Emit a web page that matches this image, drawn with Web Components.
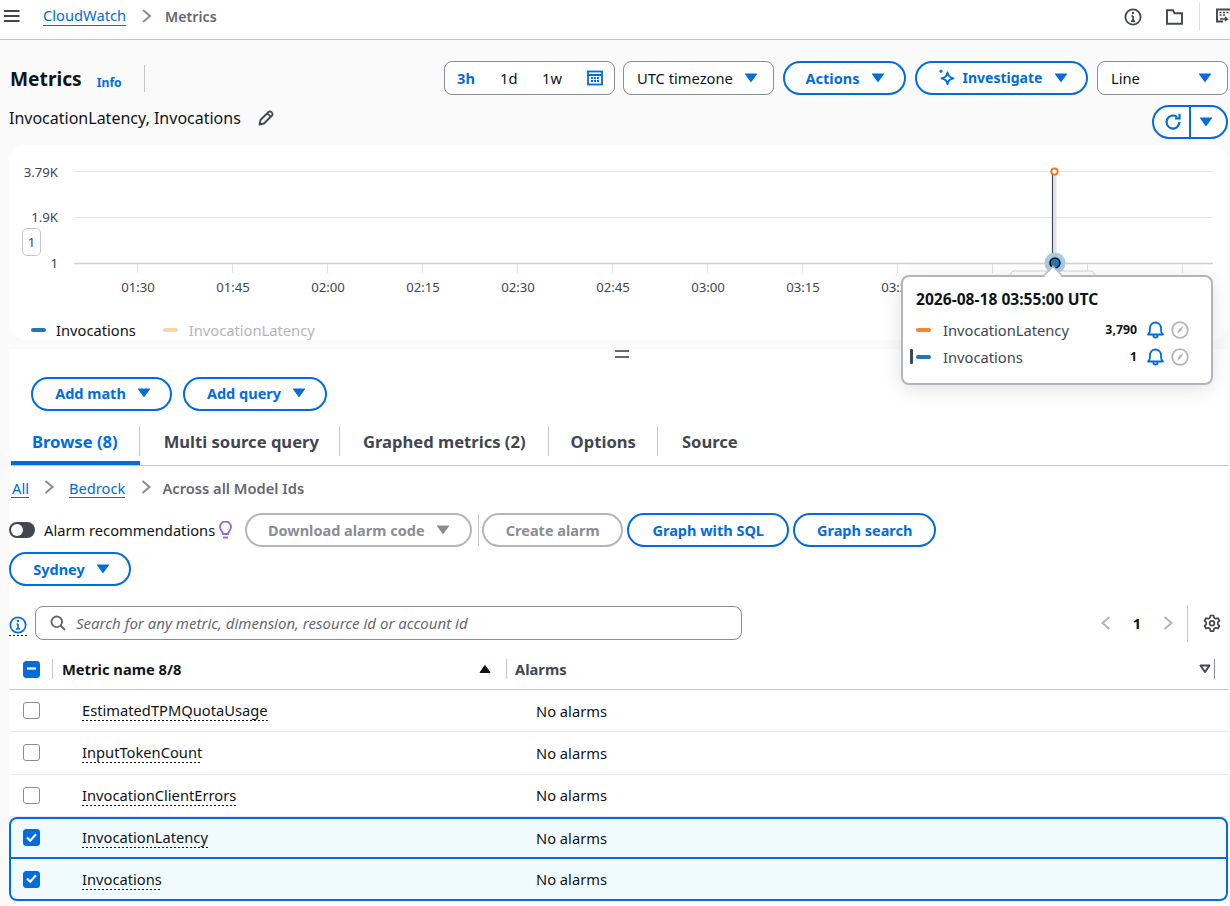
<!DOCTYPE html>
<html><head><meta charset="utf-8"><style>
html,body{margin:0;padding:0;height:906px;overflow:hidden;background:#fafafa;font-family:"Noto Sans",sans-serif;color:#0f141a;font-size:14.7px}
</style></head><body>
<cw-app></cw-app>
<script>
const ARW='<svg width="14" height="10" viewBox="0 0 14 10"><path d="M1.5 1h11L7 8.5z" fill="currentColor" stroke="currentColor" stroke-width="1.2" stroke-linejoin="round"/></svg>';
const CHEV='<svg width="12" height="16" viewBox="0 0 12 16"><path d="M2.5 2l7 6-7 6" fill="none" stroke="#8c8c94" stroke-width="2"/></svg>';
function def(name,css,html){customElements.define(name,class extends HTMLElement{connectedCallback(){if(this.shadowRoot)return;const s=this.attachShadow({mode:'open'});s.innerHTML='<style>'+css+'</style>'+(typeof html==='function'?html(this):html);}});}

def('cw-btn',`:host{display:inline-flex;box-sizing:border-box;height:34px;align-items:center;justify-content:center;gap:var(--gap,13px);padding:0 0 var(--pb,0) var(--pl,0);border:2px solid #006ce0;border-radius:20px;color:#006ce0;font-weight:700;font-size:14.5px;background:#fff;white-space:nowrap;line-height:20px}
:host([disabled]){border-color:#b4b4bb;color:#8c8c94}
svg{display:block}`,el=>`<slot></slot>${el.hasAttribute('noarrow')?'':ARW}`);

def('cw-check',`:host{display:block;width:17px;height:17px;box-sizing:border-box;border:1.5px solid #8c8c94;border-radius:3px;background:#fff}
:host([on]),:host([mixed]){background:#006ce0;border-color:#006ce0}
svg{display:block;margin:-1.5px}`,el=>el.hasAttribute('on')?'<svg width="17" height="17" viewBox="0 0 17 17"><path d="M4 8.5l3.2 3.2L13 5.3" fill="none" stroke="#fff" stroke-width="2.2"/></svg>':el.hasAttribute('mixed')?'<svg width="17" height="17" viewBox="0 0 17 17"><path d="M4 8.5h9" fill="none" stroke="#fff" stroke-width="2.2"/></svg>':'');

def('cw-topbar',`:host{display:flex;box-sizing:border-box;height:40px;background:#fff;border-bottom:1px solid #c6c6cd;align-items:center;padding:0 0 7px 4px;font-size:14.7px;color:#5f6b7a}
a{color:#006ce0;border-bottom:1px solid #006ce0;line-height:19px;margin-left:23px}
b{font-weight:600;color:#656871;margin-left:12px;font-size:14.2px}
.c{margin-left:15px;display:block}
.r{margin-left:auto;display:flex;align-items:center;margin-top:1px}
.sep{width:1px;height:27px;background:#dedee3;margin:0 16px 0 16px}
svg{display:block}`,`
<svg width="16" height="14" viewBox="0 0 16 14"><path d="M0 2h15.5M0 7h15.5M0 12h15.5" stroke="#414750" stroke-width="1.8"/></svg>
<a>CloudWatch</a><svg class="c" width="12" height="16" viewBox="0 0 12 16"><path d="M2 2l7 6-7 6" fill="none" stroke="#8c8c94" stroke-width="2"/></svg><b>Metrics</b>
<div class="r">
<svg width="18" height="18" viewBox="0 0 18 18" style="margin-right:24px"><circle cx="9" cy="9" r="7.6" fill="none" stroke="#414750" stroke-width="1.8"/><path d="M9 8v5M7 13.2h4M7.3 8H9" stroke="#414750" stroke-width="1.7" fill="none"/><circle cx="9" cy="5" r="1.2" fill="#414750"/></svg>
<svg width="17" height="16" viewBox="0 0 17 16"><path d="M1 1.2h6l1.5 3H16v10.6H1z" fill="none" stroke="#414750" stroke-width="1.9"/></svg>
<div class="sep"></div>
<svg width="14" height="18" viewBox="0 0 14 18"><path d="M14 1.5H1v12h6" fill="none" stroke="#414750" stroke-width="1.9"/><path d="M3.5 4.5h2M7 4.5h2M10.5 4.5h2M3.5 7h2M7 7h2" stroke="#414750" stroke-width="1.6"/><path d="M4 11h7l-2-2M11 11l-2 2" fill="none" stroke="#414750" stroke-width="1.6"/></svg>
</div>`);

def('cw-seg',`:host{display:flex;box-sizing:border-box;height:34px;width:171px;border:1px solid #8c8c94;border-radius:8px;background:#fff;align-items:center;padding-left:12px;font-size:14.7px;margin-right:-1px}
span{display:block}.a{color:#006ce0;font-weight:700;width:43px}.n{width:43px}svg{display:block}`,`<span class="a">3h</span><span class="n" style="width:42px">1d</span><span class="n" style="width:45px">1w</span>
<svg width="16" height="16" viewBox="0 0 16 16"><rect x="1" y="1.5" width="14" height="13" fill="none" stroke="#006ce0" stroke-width="1.8"/><path d="M1 5h14" stroke="#006ce0" stroke-width="2"/><path d="M4 8h2M7 8h2M10 8h2M4 11h2M7 11h2M10 11h2" stroke="#006ce0" stroke-width="1.8"/></svg>`);

def('cw-select',`:host{display:flex;box-sizing:border-box;height:34px;border:1px solid #8c8c94;border-radius:8px;background:#fff;align-items:center;justify-content:space-between;padding:0 15px 0 13px;color:#0f141a;font-size:14.7px}
svg{color:#006ce0;display:block}`,`<slot></slot>`+ARW);

def('cw-header',`:host{display:block;box-sizing:border-box;height:105px;padding:21px 2px 0 9px;position:relative}
.row{display:flex;align-items:flex-start}
h1{margin:0 0 0 1px;font-size:19.2px;font-weight:700;line-height:36px;color:#0f141a}
.info{color:#006ce0;font-weight:700;font-size:12.2px;margin:8px 0 0 15px;line-height:28px}
.sep{width:1px;height:27px;background:#c6c6cd;margin:4px 0 0 22px}
.ctl{margin-left:auto;display:flex;gap:9px}
.row2{display:flex;align-items:flex-start;margin-top:8px}
.t{font-size:16px;line-height:20px;margin-top:3px;color:#0f141a}
.pen{margin:5px 0 0 17px;display:block}
.ref{margin-left:auto;display:flex;box-sizing:border-box;width:76px;height:34px;border:2px solid #006ce0;border-radius:20px;background:#fff;color:#006ce0;align-items:center}
.ref div{flex:1;display:flex;justify-content:center;align-items:center;height:100%}
.ref div:first-child{padding-left:2px}
.ref div+div{border-left:2px solid #006ce0;flex:0 0 37px;box-sizing:border-box;padding-right:6px}
.ref svg{display:block}
`,`<div class="row"><h1>Metrics</h1><div class="info">Info</div><div class="sep"></div>
<div class="ctl"><cw-seg></cw-seg><cw-select style="width:151px">UTC timezone</cw-select>
<cw-btn style="width:123px;--gap:12px;--pl:2px">Actions</cw-btn>
<cw-btn style="width:173px;--gap:12px;--pl:3px"><span style="display:inline-flex;align-items:center;gap:7px;font-size:14px"><svg width="18" height="18" viewBox="0 0 18 18"><path d="M9.500 3.500c.8 3.600 2 4.700 6 5.800-4 1.100-5.200 2.200-6 5.900-.8-3.700-2-4.800-6-5.900 4-1.100 5.200-2.200 6-5.800z" fill="none" stroke="#006ce0" stroke-width="1.900" stroke-linejoin="round"/><path d="M3 .5v3.500M1.200 2.200h3.600" stroke="#006ce0" stroke-width="1.300"/></svg>Investigate</span></cw-btn>
<cw-select style="width:131px">Line</cw-select></div></div>
<div class="row2"><div class="t">InvocationLatency, Invocations</div>
<svg class="pen" width="16" height="16" viewBox="0 0 16 16"><path d="M1.500 14.500l1-4.500L10.500 2a1.900 1.900 0 0 1 2.700 0l.8.8a1.900 1.900 0 0 1 0 2.700L6 13.500z M9.300 3.300l3.400 3.400" fill="none" stroke="#414750" stroke-width="1.800" stroke-linejoin="round"/></svg>
<div class="ref"><div><svg width="18" height="18" viewBox="0 0 18 18"><path d="M15.500 9A6.500 6.500 0 1 1 13 3.900" fill="none" stroke="#006ce0" stroke-width="2.200"/><path d="M15.500 .8v4.500H11" fill="none" stroke="#006ce0" stroke-width="2.200"/></svg></div><div>${ARW}</div></div></div>`);

const times=[['01:30',138],['01:45',233],['02:00',328],['02:15',423],['02:30',518],['02:45',613],['03:00',708],['03:15',803],['03:30',898],['03:45',993],['04:00',1088],['04:15',1183]];
def('cw-chart',`:host{display:block;box-sizing:border-box;height:195px;margin:0 2px 0 9px;background:#fff;border-radius:16px;position:relative;overflow:visible}
svg{position:absolute;left:-9px;top:-145px;overflow:visible}
text{font-family:"Noto Sans",sans-serif;font-size:13.200px;fill:#424650}
.one{position:absolute;left:13px;top:83px;width:19px;height:28px;box-sizing:border-box;border:1px solid #c6c6cd;border-radius:5px;background:#fff;font-size:13.200px;display:flex;align-items:center;justify-content:center;color:#424650}
.leg{position:absolute;left:22px;top:175px;display:flex;align-items:center;font-size:14.7px;line-height:20px}
.leg i{display:block;width:15px;height:4px;border-radius:2px}
`,`<svg width="1230" height="400">
<path d="M74 171.500H1213M74 217.500H1213" stroke="#e6e6ea" stroke-width="1"/>
<path d="M74 263.500H1213" stroke="#d0d0d6" stroke-width="1.500"/>
${times.map(t=>`<path d="M${t[1]-.5} 264v9" stroke="#e0e0e4"/>`).join('')}
${times.filter(t=>t[1]<900).map(t=>`<text x="${t[1]}" y="292" text-anchor="middle">${t[0]}</text>`).join('')}
<text x="58" y="177" text-anchor="end">3.79K</text><text x="58" y="222" text-anchor="end">1.9K</text><text x="58" y="268" text-anchor="end">1</text>
<rect x="1010.500" y="271" width="84" height="20" rx="4" fill="#fff" stroke="#d5d5da"/>
<path d="M1055 172v90" stroke="#e0e0e6" stroke-width="3"/><path d="M1052.500 172v90" stroke="#414750" stroke-width="1.200"/>
<circle cx="1054.500" cy="171.500" r="3.200" fill="#fff" stroke="#ec7211" stroke-width="1.800"/>
<circle cx="1055" cy="263" r="10.500" fill="#a6cbe3"/><circle cx="1055" cy="263" r="5" fill="#1f78b4" stroke="#0f141a" stroke-width="1.600"/>
</svg>
<div class="one">1</div>
<div class="leg"><i style="background:#1f78b4"></i><span style="margin:0 27px 0 10px">Invocations</span><i style="background:#fdd3ac"></i><span style="margin-left:11px;color:#b4b4bb">InvocationLatency</span></div>`);

def('cw-tip',`:host{position:absolute;left:901px;top:275px;width:312px;height:110px;box-sizing:border-box;background:#fff;border:2px solid #b4b4bb;border-radius:8px;box-shadow:0 4px 20px rgba(0,7,22,.12);padding:12px 22px 0 13px;z-index:5;display:block}
.h{font-weight:700;font-size:15.600px;line-height:21px;margin-bottom:6px}
.r{display:flex;align-items:center;height:27px;color:#424650;font-size:14.7px;position:relative}
.r i{display:block;width:15px;height:4px;border-radius:2px;margin-right:12px}
.r b{margin-left:auto;font-size:12.300px;color:#0f141a;margin-right:10px;font-weight:700}
svg{display:block}.bell{margin-right:7px}.bar{position:absolute;left:-6px;top:6px;width:3px;height:15px;background:#414750;border-radius:1px}
.ar{position:absolute;left:141px;top:-11px;width:16px;height:16px;background:#fff;border-left:2px solid #b4b4bb;border-top:2px solid #b4b4bb;transform:rotate(45deg) scale(.75)}`,()=>{
const bell='<svg class="bell" width="17" height="18" viewBox="0 0 17 18"><path d="M1 13.500c1.500-1 2-2.200 2-4.500V7a5.500 5.500 0 0 1 11 0v2c0 2.300.5 3.500 2 4.500z M6.300 14c0 3.500 4.400 3.500 4.400 0" fill="none" stroke="#006ce0" stroke-width="1.800" stroke-linejoin="round"/></svg>';
const cmp='<svg width="18" height="18" viewBox="0 0 18 18"><circle cx="9" cy="9" r="7.800" fill="none" stroke="#b4b4bb" stroke-width="1.800"/><path d="M12.500 5L10 10 6 13 8 8z" fill="#b4b4bb"/></svg>';
return `<div class="ar"></div><div class="h">2026-08-18 03:55:00 UTC</div>
<div class="r"><i style="background:#f58536"></i>InvocationLatency<b>3,790</b>${bell}${cmp}</div>
<div class="r"><div class="bar"></div><i style="background:#1f78b4"></i>Invocations<b>1</b>${bell}${cmp}</div>`});

def('cw-tabs',`:host{display:flex;height:42px;box-sizing:border-box;border-bottom:1px solid #c6c6cd;margin-top:13px;margin-left:2px;align-items:flex-start;font-size:16.600px;font-weight:700;color:#424650}
.t{box-sizing:border-box;height:41px;padding:5px 22px 0;line-height:25px;position:relative;white-space:nowrap}
.t+.t::before{content:"";position:absolute;left:-1px;top:2px;width:1px;height:30px;background:#c6c6cd}
.a{color:#006ce0;border-bottom:4px solid #006ce0;padding-left:21px;padding-right:22px}`,`<div class="t a">Browse (8)</div><div class="t" style="padding-left:24px;padding-right:21px">Multi source query</div><div class="t" style="padding-left:23px;padding-right:23px">Graphed metrics (2)</div><div class="t" style="padding-left:22px">Options</div><div class="t" style="padding-left:24px">Source</div>`);

def('cw-crumbs',`:host{display:flex;align-items:center;height:20px;font-size:14.7px;margin:12px 0 0 2px}
a{color:#006ce0;border-bottom:1px solid #006ce0;line-height:18px;padding-left:1px}
a+svg{margin:-3px 14px 0 14px}
a+svg+a+svg{margin:-3px 10px 0 15px}
b{font-weight:600;color:#656871;white-space:nowrap}`,`<a>All</a>${CHEV}<a style="padding-left:0">Bedrock</a>${CHEV}<b>Across all Model Ids</b>`);

def('cw-toolbar',`:host{display:flex;align-items:center;margin-top:15px;font-size:14.7px;height:34px}
.tog{width:26px;height:16px;border-radius:8px;background:#414750;position:relative;flex:none}
.tog::after{content:"";position:absolute;left:2px;top:2px;width:12px;height:12px;border-radius:50%;background:#fff}
span{margin-left:9px;white-space:nowrap}
.bulb{display:block;margin:0 13px 0 4px;flex:none}
.div{width:1px;height:32px;background:#c6c6cd;margin:0 3px 0 6px}
cw-btn{flex:none}`,`<div class="tog"></div><span>Alarm recommendations</span>
<svg class="bulb" width="13" height="19" viewBox="0 0 13 19"><path d="M4 13c0-2.500-3-3.500-3-7a5.500 5.500 0 0 1 11 0c0 3.500-3 4.500-3 7z" fill="none" stroke="#9469d6" stroke-width="1.800"/><path d="M4 16.500h5" stroke="#9469d6" stroke-width="1.800"/></svg>
<cw-btn disabled style="width:227px;--gap:11px">Download alarm code</cw-btn><div class="div"></div>
<cw-btn disabled noarrow style="width:141px">Create alarm</cw-btn>
<cw-btn noarrow style="width:162px;margin-left:4px">Graph with SQL</cw-btn>
<cw-btn noarrow style="width:143px;margin-left:4px">Graph search</cw-btn>`);

def('cw-searchrow',`:host{display:flex;align-items:center;height:34px;margin-top:20px}
.i{flex:none;width:18px;height:21px;margin-top:4px;background:repeating-linear-gradient(90deg,#0f141a 0 2px,transparent 2px 4px) bottom/100% 1px no-repeat;display:block;box-sizing:border-box;padding:1px 0 0 0}
.s{margin-left:8px;width:707px;box-sizing:border-box;height:34px;border:1px solid #8c8c94;border-radius:8px;background:#fff;display:flex;align-items:center;padding-left:14px;font-style:italic;color:#656871;font-size:15px}
.s svg{margin-right:10px;flex:none}
.p{margin-left:auto;display:flex;align-items:center;font-size:14.7px;font-weight:700}
.sep{width:1px;height:37px;background:#c6c6cd;margin:0 15px 0 13px}`,`<div class="i"><svg width="18" height="18" viewBox="0 0 18 18" style="display:block"><circle cx="9" cy="9" r="7.700" fill="none" stroke="#006ce0" stroke-width="1.700"/><path d="M9 8v5M7 13h4M7.500 8H9" stroke="#006ce0" stroke-width="1.600" fill="none"/><circle cx="9" cy="5" r="1.200" fill="#006ce0"/></svg></div>
<div class="s"><svg width="16" height="16" viewBox="0 0 16 16"><circle cx="6.800" cy="6.800" r="5.300" fill="none" stroke="#656871" stroke-width="1.900"/><path d="M10.500 10.500L15 15" stroke="#656871" stroke-width="2"/></svg>Search for any metric, dimension, resource id or account id</div>
<div class="p"><svg width="12" height="16" viewBox="0 0 12 16"><path d="M9.500 2l-7 6 7 6" fill="none" stroke="#b4b4bb" stroke-width="2"/></svg><span style="width:50px;text-align:center">1</span><svg width="12" height="16" viewBox="0 0 12 16"><path d="M2.500 2l7 6-7 6" fill="none" stroke="#b4b4bb" stroke-width="2"/></svg><div class="sep"></div>
<svg width="18" height="18" viewBox="0 0 18 18"><path d="M7.500 1.500h3l.5 2.300 1.700 1 2.300-.7 1.500 2.600-1.700 1.600v2l1.700 1.600-1.500 2.600-2.300-.7-1.700 1-.5 2.300h-3L7 14.800l-1.700-1-2.300.7-1.500-2.600 1.700-1.600v-2L1.500 6.700 3 4.100l2.300.7 1.700-1z" fill="none" stroke="#414750" stroke-width="1.700" stroke-linejoin="round"/><circle cx="9" cy="9.300" r="2.400" fill="none" stroke="#414750" stroke-width="1.700"/></svg><span style="width:7px"></span></div>`);

def('cw-thead',`:host{display:flex;align-items:center;box-sizing:border-box;height:41px;border-bottom:1px solid #c6c6cd;margin-top:9px;font-size:14.7px;font-weight:700;position:relative}
.c{margin-left:14px;flex:none}
.s1{width:1px;height:20px;background:#c6c6cd;margin-left:12px}
.n{margin-left:9px;width:417px;color:#0f141a}
.up{display:block;flex:none}
.a{margin-left:15px;color:#424650;padding-left:8px;border-left:1px solid #c6c6cd;line-height:20px}
.d{margin-left:auto;display:flex;align-items:center;margin-right:13px;height:20px;gap:3px}.d i{display:block;width:1px;height:20px;background:#8c8c94}
`,`<cw-check mixed class="c"></cw-check><div class="s1"></div><div class="n">Metric name 8/8</div>
<svg class="up" width="12" height="10" viewBox="0 0 12 10"><path d="M1 8.500h10L6 1.500z" fill="#0f141a" stroke="#0f141a" stroke-linejoin="round"/></svg><div class="a">Alarms</div>
<div class="d"><svg width="12" height="10" viewBox="0 0 12 10"><path d="M1.500 1.500h9L6 8z" fill="none" stroke="#414750" stroke-width="2" stroke-linejoin="round"/></svg><i></i></div>`);

def('cw-row',`:host{display:flex;align-items:center;box-sizing:border-box;height:42.300px;font-size:14.7px;border-bottom:1px solid #e8e8ec;margin-left:1px;padding-left:13px;position:relative}
:host([sel]){background:#f0fbff;border:2px solid #006ce0;margin:0;padding-left:12px}
:host([sel=top]){border-radius:8px 8px 0 0;height:42.500px;padding-bottom:1px}
:host([sel=bot]){border-radius:0 0 8px 8px;border-top:0;height:42px}
.n{margin-left:42px;width:454px}
u{text-decoration:none;padding-bottom:2px;line-height:17px;display:inline-block;background:repeating-linear-gradient(90deg,#0f141a 0 2px,transparent 2px 4px) bottom/100% 1px no-repeat}
`,el=>`<cw-check ${el.hasAttribute('sel')?'on':''}></cw-check><div class="n"><u><slot></slot></u></div><div>No alarms</div>`);

def('cw-lower',`:host{display:block;box-sizing:border-box;height:558px;margin:9px 2px 0 9px;background:#fff;padding-top:28px;position:relative}
.grip{position:absolute;left:606px;top:1px;width:14px;height:8px;border-top:2px solid #656871;border-bottom:2px solid #656871;box-sizing:border-box}
.q{display:flex;gap:11px;margin-left:22px}
cw-btn{flex:none}`,`<div class="grip"></div>
<div class="q"><cw-btn style="width:141px;--pl:3px;--gap:11px;--pb:2px">Add math</cw-btn><cw-btn style="width:144px;--pl:3px;--gap:11px;--pb:2px">Add query</cw-btn></div>
<cw-tabs></cw-tabs><cw-crumbs></cw-crumbs><cw-toolbar></cw-toolbar>
<cw-btn style="display:flex;width:122px;margin-top:5px;--gap:11px;--pl:3px">Sydney</cw-btn>
<cw-searchrow></cw-searchrow><cw-thead></cw-thead>
<cw-row>EstimatedTPMQuotaUsage</cw-row><cw-row>InputTokenCount</cw-row><cw-row>InvocationClientErrors</cw-row>
<cw-row sel="top">InvocationLatency</cw-row><cw-row sel="bot">Invocations</cw-row>`);

def('cw-app',`:host{display:block;width:1230px;height:906px;position:relative;overflow:hidden}`,`<cw-topbar></cw-topbar><cw-header></cw-header><cw-chart></cw-chart><cw-lower></cw-lower><cw-tip></cw-tip>`);
</script>
</body></html>
